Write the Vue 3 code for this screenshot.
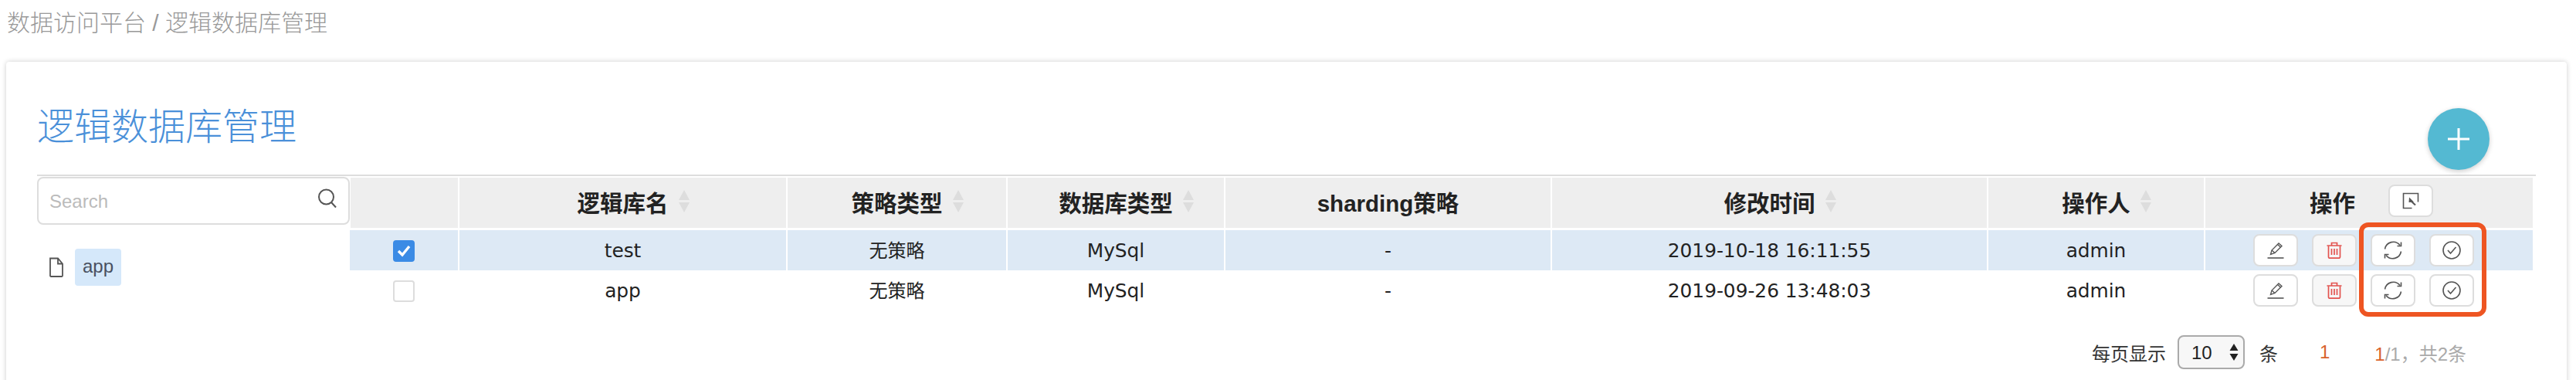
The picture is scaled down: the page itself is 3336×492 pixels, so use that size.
<template>
  <div class="page">
    <div class="breadcrumb">数据访问平台 / 逻辑数据库管理</div>
    <div class="card">
      <div class="titleRow">
        <h1 class="title">逻辑数据库管理</h1>
        <button class="fab" type="button">
          <svg width="30" height="30" viewBox="0 0 30 30"><path d="M15 1v28M1 15h28" stroke="#fff" stroke-width="3" fill="none" /></svg>
        </button>
      </div>
      <div class="content">
        <aside class="side">
          <div class="searchBox">
            <input class="searchInput" placeholder="Search" />
            <svg class="searchIcon" width="26" height="26" viewBox="0 0 26 26" fill="none" stroke="#555" stroke-width="2">
              <circle cx="11.5" cy="11" r="9.5" />
              <path d="M18 18l6 6.5" />
            </svg>
          </div>
          <div class="treeNode">
            <svg width="20" height="26" viewBox="0 0 20 26" fill="none" stroke="#555" stroke-width="1.8">
              <path d="M2 1.5h10l6 7v15.6a.9.9 0 0 1-.9.9H2.9a.9.9 0 0 1-.9-.9z" />
              <path d="M12 1.5v7h6" />
            </svg>
            <span class="treeLabel">app</span>
          </div>
        </aside>
        <div class="tableArea">
          <table class="grid">
            <colgroup>
              <col v-for="(w, i) in colWidths" :key="i" :style="{ width: w + 'px' }" />
            </colgroup>
            <thead>
              <tr>
                <th></th>
                <th v-for="col in columns" :key="col.label">
                  <span class="thLabel">
                    {{ col.label }}
                    <span v-if="col.sortable" class="sorter">
                      <i class="up"></i>
                      <i class="down"></i>
                    </span>
                  </span>
                </th>
                <th>
                  <div class="opHead">
                    <span>操作</span>
                    <button class="iconBtn headBtn" type="button">
                      <svg width="22" height="22" viewBox="0 0 22 22" fill="none" stroke="#555" stroke-width="1.6">
                        <path d="M12.500 20.500H1.500V1.500h19v11" />
                        <path d="M9 6.500l-.5 6.500 6.500-.5z" fill="#555" stroke="none" />
                        <path d="M10.500 10.500l6.500 6" stroke-width="2" />
                      </svg>
                    </button>
                  </div>
                </th>
              </tr>
            </thead>
            <tbody>
              <tr v-for="row in rows" :key="row.name" :class="{ selected: row.checked }">
                <td>
                  <span class="check" :class="{ on: row.checked }">
                    <svg v-if="row.checked" width="18" height="16" viewBox="0 0 18 16" fill="none" stroke="#fff" stroke-width="3.400"><path d="M2 8l5 5 9-11" /></svg>
                  </span>
                </td>
                <td>{{ row.name }}</td>
                <td><span class="cjkCell">{{ row.strategy }}</span></td>
                <td>{{ row.dbType }}</td>
                <td>{{ row.sharding }}</td>
                <td>{{ row.time }}</td>
                <td>{{ row.user }}</td>
                <td>
                  <div class="ops">
                    <button class="iconBtn" type="button">
                      <svg width="22" height="22" viewBox="0 0 22 22" fill="none" stroke="#555" stroke-width="1.400">
                        <path d="M4.500 16.500l1.500-5.500L15 2l4 3.500-9 9z" />
                        <path d="M13.500 3.500l4 3.500" />
                        <path d="M6 11l4 3.500" />
                        <path d="M.5 21h21" stroke-width="1.600" />
                      </svg>
                    </button>
                    <button class="iconBtn danger" type="button">
                      <svg width="20" height="22" viewBox="0 0 20 22" fill="none" stroke="#e2534f" stroke-width="1.700">
                        <path d="M2.500 5.500v14.200a1.500 1.500 0 0 0 1.500 1.500h12a1.500 1.500 0 0 0 1.500-1.500V5.500" />
                        <path d="M.5 5h19M6.500 4.500V1.500h7v3" />
                        <path d="M6.500 9v8M10 9v8M13.500 9v8" />
                      </svg>
                    </button>
                    <button class="iconBtn" type="button">
                      <svg width="26" height="26" viewBox="0 0 26 26" fill="none" stroke="#555" stroke-width="1.600">
                        <path d="M2.500 11.500A11 11 0 0 1 22 6.500" />
                        <path d="M23.500 14.500A11 11 0 0 1 4 19.500" />
                        <path d="M23.500 2.500v5h-5" />
                        <path d="M2.500 23.500v-5h5" />
                      </svg>
                    </button>
                    <button class="iconBtn" type="button">
                      <svg width="24" height="24" viewBox="0 0 24 24" fill="none" stroke="#555" stroke-width="1.600">
                        <circle cx="12" cy="12" r="11" />
                        <path d="M7 12l3.500 4 7-8" />
                      </svg>
                    </button>
                  </div>
                </td>
              </tr>
            </tbody>
          </table>
          <div class="marker"></div>
          <div class="pager">
            <span class="pagerText">每页显示</span>
            <div class="sizeSelect">
              <select class="sizeInput">
                <option>10</option>
              </select>
              <svg class="sizeArrows" width="12" height="24" viewBox="0 0 12 24" fill="#222"><path d="M6 1l5.500 9H.5zM6 23L.5 14h11z" /></svg>
            </div>
            <span class="pagerText unit">条</span>
            <span class="pageNow">1</span>
            <span class="pageInfo"><em>1</em>/1，共2条</span>
          </div>
        </div>
      </div>
    </div>
  </div>
</template>

<script setup>
const colWidths = [142, 425, 285, 282, 423, 565, 281, 424]

const columns = [
  { label: '逻辑库名', sortable: true },
  { label: '策略类型', sortable: true },
  { label: '数据库类型', sortable: true },
  { label: 'sharding策略', sortable: false },
  { label: '修改时间', sortable: true },
  { label: '操作人', sortable: true }
]

const rows = [
  { name: 'test', strategy: '无策略', dbType: 'MySql', sharding: '-', time: '2019-10-18 16:11:55', user: 'admin', checked: true },
  { name: 'app', strategy: '无策略', dbType: 'MySql', sharding: '-', time: '2019-09-26 13:48:03', user: 'admin', checked: false }
]
</script>

<style>
html,
body {
  margin: 0;
  background: #fff;
  overflow: hidden;
}
</style>

<style scoped>
.page {
  height: 492px;
  overflow: hidden;
  font-family: "Liberation Sans", "Noto Sans CJK SC", sans-serif;
}

.breadcrumb {
  height: 80px;
  padding: 12px 0 0 9px;
  box-sizing: border-box;
  font-size: 30px;
  line-height: 36px;
  font-weight: 300;
  color: #999;
}

.card {
  margin: 0 12px 0 8px;
  padding: 0 40px;
  height: 500px;
  background: #fff;
  border-radius: 4px;
  box-shadow: 0 0 6px rgba(0, 0, 0, 0.2);
}

.titleRow {
  display: flex;
  justify-content: space-between;
  align-items: flex-start;
  height: 146px;
  box-sizing: border-box;
  padding: 61px 60px 0 0;
}

.title {
  margin: 0;
  font-size: 48px;
  line-height: 48px;
  font-weight: 300;
  color: #4a90d9;
}

.fab {
  width: 80px;
  height: 80px;
  margin-top: -1px;
  padding: 0;
  display: flex;
  align-items: center;
  justify-content: center;
  border: 0;
  border-radius: 50%;
  background: #54b9d2;
  box-shadow: 0 2px 6px rgba(0, 0, 0, 0.2);
}

.content {
  display: flex;
  border-top: 2px solid #ddd;
  padding-right: 4px;
}

.side {
  width: 405px;
  flex-shrink: 0;
}

.searchBox {
  display: flex;
  align-items: center;
  height: 62px;
  margin-top: 1px;
  padding: 0 14px 0 14px;
  box-sizing: border-box;
  border: 2px solid #ddd;
  border-radius: 8px;
}

.searchInput {
  flex: 1;
  min-width: 0;
  margin-top: 2px;
  border: 0;
  outline: 0;
  padding: 0;
  font: 24px "Liberation Sans", sans-serif;
}

.searchInput::placeholder {
  color: #bbb;
}

.searchIcon {
  margin-top: -6px;
}

.treeNode {
  display: flex;
  align-items: center;
  gap: 14px;
  margin: 31px 0 0 15px;
}

.treeLabel {
  padding: 0 10px;
  height: 48px;
  line-height: 46px;
  border-radius: 4px;
  background: #d5e8fa;
  color: #495060;
  font-size: 24px;
}

.tableArea {
  position: relative;
  width: 2827px;
  padding-top: 2px;
}

.grid {
  width: 2827px;
  table-layout: fixed;
  border-collapse: separate;
  border-spacing: 0;
  font-family: "DejaVu Sans", "Noto Sans CJK SC", sans-serif;
  color: #222;
}

.grid th {
  height: 68px;
  padding: 0 0 3px;
  box-sizing: border-box;
  background: #eee;
  border-right: 2px solid #fff;
  border-bottom: 3px solid #fff;
  font-family: "Liberation Sans", "Noto Sans CJK SC", sans-serif;
  font-size: 29.5px;
  font-weight: 700;
  text-align: center;
}

.grid th:first-child {
  border-left: 1px solid #fff;
}

.grid th:last-child,
.grid td:last-child {
  border-right: 0;
}

.grid td {
  height: 52px;
  padding: 0;
  box-sizing: border-box;
  border-right: 2px solid #fff;
  font-size: 24.8px;
  text-align: center;
}

.cjkCell {
  position: relative;
  top: -2px;
  font-size: 24px;
}

.grid tr.selected td {
  background: #dde9f5;
}

.thLabel {
  position: relative;
  display: inline-block;
}

.sorter {
  position: absolute;
  left: 100%;
  top: 50%;
  margin: -15px 0 0 13px;
  display: flex;
  flex-direction: column;
  gap: 3px;
}

.sorter i {
  display: block;
  width: 0;
  height: 0;
  border-left: 7px solid transparent;
  border-right: 7px solid transparent;
}

.sorter .up {
  border-bottom: 13px solid #ddd;
}

.sorter .down {
  border-top: 13px solid #ddd;
}

.opHead {
  display: flex;
  align-items: center;
  gap: 43px;
  padding-left: 135px;
  text-align: left;
}

.ops {
  display: flex;
  gap: 18px;
  padding-left: 62px;
}

.iconBtn {
  width: 58px;
  height: 42px;
  padding: 0;
  display: flex;
  align-items: center;
  justify-content: center;
  background: #fff;
  border: 2px solid #ddd;
  border-radius: 8px;
}

.iconBtn.danger {
  background: #f7f7f7;
}

.headBtn {
  margin-top: -3px;
}

.check {
  display: inline-flex;
  align-items: center;
  justify-content: center;
  width: 28px;
  height: 28px;
  box-sizing: border-box;
  vertical-align: middle;
  border: 2px solid #ddd;
  border-radius: 4px;
  background: #fff;
}

.check.on {
  background: #3b8be5;
  border-color: #3b8be5;
}

.marker {
  position: absolute;
  left: 2602px;
  top: 60px;
  width: 165px;
  height: 122px;
  box-sizing: border-box;
  border: 6px solid #ee5522;
  border-radius: 12px;
}

.pager {
  display: flex;
  align-items: center;
  justify-content: flex-end;
  margin-top: 32px;
  padding-right: 86px;
  font-size: 24px;
  color: #333;
}

.sizeSelect {
  position: relative;
  width: 87px;
  height: 44px;
  margin-left: 15px;
}

.sizeInput {
  width: 100%;
  height: 100%;
  padding: 0 0 0 16px;
  box-sizing: border-box;
  appearance: none;
  border: 2px solid #aaa;
  border-radius: 8px;
  background: #f7f7f7;
  color: #222;
  font: 24px "Liberation Sans", sans-serif;
}

.sizeArrows {
  position: absolute;
  right: 8px;
  top: 10px;
}

.unit {
  margin-left: 19px;
}

.pageNow {
  margin-left: 54px;
  color: #d9622b;
}

.pageInfo {
  margin-left: 58px;
  color: #aaa;
}

.pageInfo em {
  font-style: normal;
  color: #d9622b;
}
</style>
